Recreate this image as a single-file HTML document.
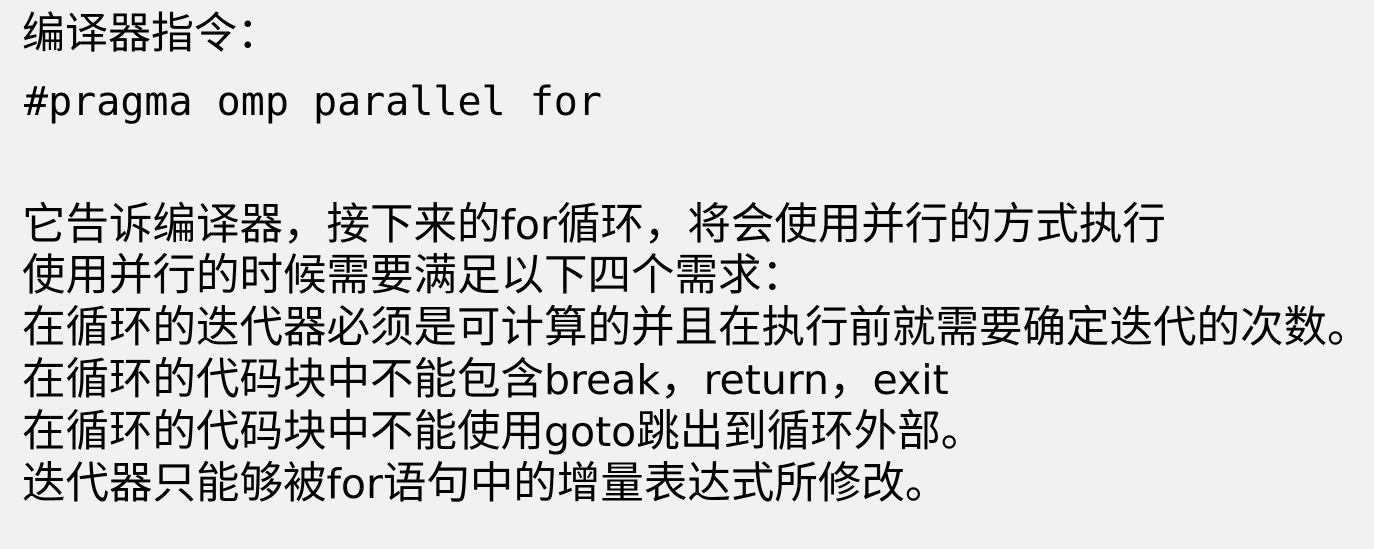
<!DOCTYPE html>
<html><head><meta charset="utf-8"><style>
html,body{margin:0;padding:0;}
body{width:1374px;height:549px;background:#f1f1f1;position:relative;overflow:hidden;color:#000;}
.l{position:absolute;left:22px;white-space:nowrap;font-family:"Liberation Sans","Noto Sans CJK SC",sans-serif;font-size:43.5px;line-height:44px;}
.l span{font-family:"DejaVu Sans",sans-serif;font-size:41px;}
.c{position:absolute;left:24px;top:82px;font-family:"DejaVu Sans Mono","Liberation Mono",monospace;font-size:40px;line-height:40px;white-space:pre;}
</style></head><body>
<div class="l" style="top:12px;font-size:43px;">编译器指令：</div>
<div class="c">#pragma omp parallel for</div>
<div class="l" style="top:203px;">它告诉编译器，接下来的<span>for</span>循环，将会使用并行的方式执行</div>
<div class="l" style="top:254px;">使用并行的时候需要满足以下四个需求：</div>
<div class="l" style="top:306px;">在循环的迭代器必须是可计算的并且在执行前就需要确定迭代的次数。</div>
<div class="l" style="top:358px;">在循环的代码块中不能包含<span>break</span>，<span>return</span>，<span>exit</span></div>
<div class="l" style="top:410px;">在循环的代码块中不能使用<span>goto</span>跳出到循环外部。</div>
<div class="l" style="top:462px;">迭代器只能够被<span>for</span>语句中的增量表达式所修改。</div>
</body></html>
